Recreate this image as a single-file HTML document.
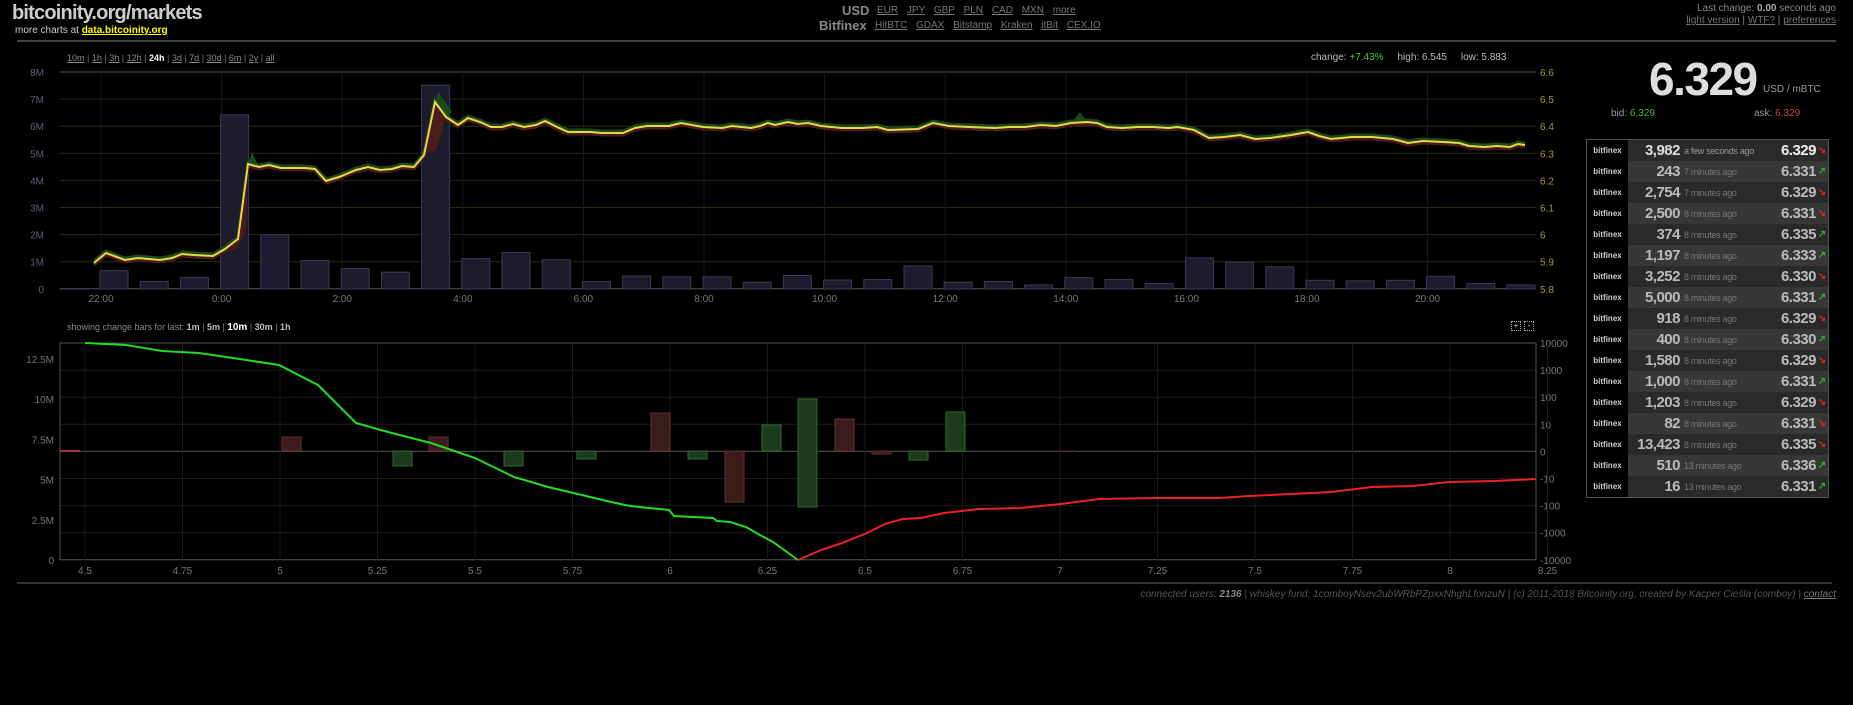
<!DOCTYPE html>
<html><head><meta charset="utf-8"><style>
body{margin:0;background:#000;width:1853px;height:705px;overflow:hidden;font-family:"Liberation Sans",sans-serif;position:relative;color:#888}
.a{position:absolute;white-space:nowrap}
a{color:#777;text-decoration:underline}
.tl{font-size:10px;color:#777}
.tl a{color:#888}
table{border-collapse:collapse}
td{padding:0;height:21px;font-size:10px}
</style></head><body>
<div class="a" style="left:12px;top:2px;font-size:20px;font-weight:bold;color:#ccc;letter-spacing:-0.8px">bitcoinity.org/markets</div>
<div class="a" style="left:15px;top:25px;font-size:10px;color:#ccc">more charts at <a style="color:#ff0;font-weight:bold">data.bitcoinity.org</a></div>
<div class="a" style="left:842px;top:3px;font-size:13px;font-weight:bold;color:#888">USD</div>
<div class="a" style="left:877px;top:5px;font-size:10px;word-spacing:6px"><a>EUR</a> <a>JPY</a> <a>GBP</a> <a>PLN</a> <a>CAD</a> <a>MXN</a> <a>more</a></div>
<div class="a" style="left:819px;top:18px;font-size:13px;font-weight:bold;color:#888">Bitfinex</div>
<div class="a" style="left:875px;top:20px;font-size:10px;word-spacing:6px"><a>HitBTC</a> <a>GDAX</a> <a>Bitstamp</a> <a>Kraken</a> <a>itBit</a> <a>CEX.IO</a></div>
<div class="a" style="right:17px;top:3px;font-size:10px;color:#888;text-align:right">Last change: <b style="color:#aaa">0.00</b> seconds ago<br><span style="line-height:14px"><a>light version</a> | <a>WTF?</a> | <a>preferences</a></span></div>
<div class="a" style="left:17px;top:40px;width:1819px;height:2px;background:#444"></div>
<div class="a tl" style="left:67px;top:53px;font-size:9px"><a>10m</a> | <a>1h</a> | <a>3h</a> | <a>12h</a> | <b style="color:#fff">24h</b> | <a>3d</a> | <a>7d</a> | <a>30d</a> | <a>6m</a> | <a>2y</a> | <a>all</a></div>
<div class="a" style="left:1311px;top:52px;font-size:10px;color:#bbb">change: <span style="color:#4c4">+7.43%</span> &nbsp; &nbsp; high: 6.545 &nbsp; &nbsp; low: 5.883</div>
<div class="a" style="left:67px;top:322px;font-size:9px;color:#888">showing change bars for last: <b style="color:#bbb">1m</b> | <b style="color:#bbb">5m</b> | <b style="color:#fff;font-size:10px">10m</b> | <b style="color:#bbb">30m</b> | <b style="color:#bbb">1h</b></div>
<div class="a" style="left:1511px;top:321px;width:8px;height:8px;border:1px dotted #aaa;font-size:8px;line-height:8px;text-align:center;color:#ccc">+</div>
<div class="a" style="left:1524px;top:321px;width:8px;height:8px;border:1px dotted #aaa;font-size:8px;line-height:8px;text-align:center;color:#ccc">-</div>
<svg class="a" style="left:0;top:0" width="1853" height="705" id="s"></svg>
<div class="a" style="left:1649px;top:52px;font-size:46px;font-weight:bold;color:#ddd;letter-spacing:-1.5px">6.329</div>
<div class="a" style="left:1763px;top:84px;font-size:10px;color:#999">USD / mBTC</div>
<div class="a" style="left:1611px;top:108px;font-size:10px;color:#999">bid: <span style="color:#4b4">6.329</span></div>
<div class="a" style="left:1754px;top:108px;font-size:10px;color:#999">ask: <span style="color:#c44">6.329</span></div>
<div class="a" style="left:1586px;top:139px;border:1px solid #555"><table id="t"></table></div>
<div class="a" style="left:17px;top:582px;width:1815px;height:2px;background:#333"></div>
<div class="a" style="right:17px;top:589px;font-size:10px;font-style:italic;color:#555">connected users: <b style="color:#888">2136</b> | whiskey fund: 1comboyNsev2ubWRbPZpxxNhghLfonzuN | (c) 2011-2018 Bitcoinity.org, created by Kacper Cieśla (comboy) | <a style="color:#777">contact</a></div>
<script>
var s='';
function L(x1,y1,x2,y2,c,w){s+='<line x1="'+x1+'" y1="'+y1+'" x2="'+x2+'" y2="'+y2+'" stroke="'+c+'" stroke-width="'+(w||1)+'"/>';}
function T(x,y,t,c,a){s+='<text x="'+x+'" y="'+y+'" fill="'+c+'" font-size="10" font-family="Liberation Sans" text-anchor="'+(a||'start')+'">'+t+'</text>';}
var X0=60,X1=1536,Y0=72,Y1=289;
for(var i=0;i<=8;i++){var y=Y0+i*27.1;L(X0,y,X1,y,i==0||i==8?'#555':'#2a2a14');T(44,y+4,['8M','7M','6M','5M','4M','3M','2M','1M','0'][i],'#5a5f7a','end');T(1540,y+4,['6.6','6.5','6.4','6.3','6.2','6.1','6','5.9','5.8'][i],'#a09a3a');}
var hrs=['22:00','0:00','2:00','4:00','6:00','8:00','10:00','12:00','14:00','16:00','18:00','20:00'];
for(var i=0;i<12;i++){var x=101+i*120.6;L(x,Y0,x,Y1,'#1a1a1a');T(x,302,hrs[i],'#777','middle');}
var bv=[0.02,0.68,0.28,0.43,6.43,2.0,1.05,0.75,0.62,7.52,1.12,1.35,1.08,0.27,0.48,0.45,0.45,0.25,0.5,0.33,0.35,0.85,0.25,0.28,0.15,0.42,0.35,0.2,1.15,1.0,0.82,0.32,0.3,0.32,0.47,0.2,0.15];
for(var i=0;i<bv.length;i++){var x=i==0?60:100+(i-1)*40.2,h=bv[i]*27.1;s+='<rect x="'+x+'" y="'+(Y1-h)+'" width="28" height="'+h+'" fill="#1c1c2c" stroke="#3a3a55"/>';}
var p=[[94,263],[106,253],[125,260],[138,258],[160,260],[172,258],[182,254],[194,255],[213,256],[225,249],[238,239],[248,164],[259,167],[269,165],[281,168],[305,168],[315,169],[326,181],[339,177],[356,170],[368,167],[380,170],[392,169],[402,166],[414,167],[424,155],[435,102],[446,117],[458,125],[468,118],[480,122],[491,127],[502,127],[513,124],[524,127],[536,125],[545,121],[557,127],[568,132],[591,132],[601,133],[623,133],[635,128],[647,126],[669,126],[681,123],[703,127],[722,128],[732,126],[751,128],[760,126],[768,123],[775,125],[788,122],[798,124],[808,123],[821,126],[842,128],[862,128],[877,127],[888,130],[918,129],[933,123],[949,126],[969,127],[995,128],[1010,127],[1025,127],[1041,125],[1056,126],[1071,123],[1087,122],[1097,123],[1107,127],[1122,128],[1138,127],[1153,127],[1168,128],[1178,127],[1194,130],[1209,138],[1224,137],[1240,135],[1255,139],[1270,138],[1291,135],[1308,132],[1319,136],[1331,139],[1352,137],[1372,137],[1393,139],[1408,143],[1423,141],[1444,142],[1459,143],[1469,146],[1484,147],[1497,146],[1510,147],[1518,144],[1525,145]];
function pl(o,c,w){return '<polyline fill="none" stroke="'+c+'" stroke-width="'+w+'" points="'+p.map(function(q){return q[0]+','+(q[1]+o)}).join(' ')+'"/>';}
s+='<polygon fill="#4a1c1c" points="225,249 238,239 248,164 246,230 236,250"/><polygon fill="#4a1c1c" points="424,155 435,102 446,117 436,150"/><polygon fill="#1c4a1c" points="435,102 446,117 452,112 438,92"/><polygon fill="#1c4a1c" points="248,164 259,167 252,152"/><polygon fill="#1c4a1c" points="1071,123 1087,122 1080,112"/>';
s+=pl(-2,'#1c4a1c',3)+pl(2,'#4a1c1c',3)+pl(0,'#e8d84a',2);
var B0=343,B1=560;
for(var i=0;i<=8;i++){var y=B0+i*27.1;L(X0,y,X1,y,i==0||i==8||i==4?'#555':'#1c1c1c');T(1540,y+4,['10000','1000','100','10','0','-10','-100','-1000','-10000'][i],'#777');}
[[12.5,'12.5M'],[10,'10M'],[7.5,'7.5M'],[5,'5M'],[2.5,'2.5M'],[0,'0']].forEach(function(v){T(54,B1-v[0]*16.08+4,v[1],'#777','end');});
for(var i=0;i<16;i++){var x=85+i*97.5;L(x,B0,x,B1,'#1a1a1a');T(x,574,''+(4.5+i*0.25),'#777','middle');}
L(60,B0,60,B1,'#555');L(X1,B0,X1,B1,'#555');
var bars=[[282,437,451,'r'],[393,451,466,'g'],[429,437,451,'r'],[504,451,466,'g'],[577,451,459,'g'],[651,413,451,'r'],[688,451,459,'g'],[725,451,502,'r'],[762,425,451,'g'],[798,399,507,'g'],[835,419,451,'r'],[872,451,454,'r'],[909,451,460,'g'],[946,412,451,'g']];
bars.forEach(function(b){var g=b[3]=='g';s+='<rect x="'+b[0]+'" y="'+b[1]+'" width="19" height="'+(b[2]-b[1])+'" fill="'+(g?'#1c3a1c':'#3a1c1c')+'" stroke="'+(g?'#2e6a2e':'#6a2e2e')+'"/>';});
L(60,451,80,451,'#a33',2);L(1057,451,1075,451,'#622',1);
var gl=[[85,343],[126,345],[162,351],[199,353],[233,358],[279,365],[318,385],[356,423],[388,432],[431,443],[475,458],[514,477],[548,487],[582,495],[611,502],[630,506],[669,510],[674,516],[693,517],[713,518],[717,521],[730,522],[746,527],[760,535],[773,542],[798,560]];
var rl=[[798,560],[821,550],[842,543],[867,533],[885,524],[903,519],[921,518],[944,513],[979,509],[1020,508],[1061,504],[1099,499],[1158,498],[1219,498],[1250,496],[1291,494],[1331,492],[1372,487],[1413,486],[1449,482],[1495,481],[1536,479]];
s+='<polyline fill="none" stroke="#22dd22" stroke-width="2" points="'+gl.join(' ')+'"/>';
s+='<polyline fill="none" stroke="#ee2222" stroke-width="2" points="'+rl.join(' ')+'"/>';
document.getElementById('s').innerHTML=s;
var rows=[['3,982','a few seconds ago','6.329',0],['243','7 minutes ago','6.331',1],['2,754','7 minutes ago','6.329',0],['2,500','8 minutes ago','6.331',0],['374','8 minutes ago','6.335',1],['1,197','8 minutes ago','6.333',1],['3,252','8 minutes ago','6.330',0],['5,000','8 minutes ago','6.331',1],['918','8 minutes ago','6.329',0],['400','8 minutes ago','6.330',1],['1,580','8 minutes ago','6.329',0],['1,000','8 minutes ago','6.331',1],['1,203','8 minutes ago','6.329',0],['82','8 minutes ago','6.331',0],['13,423','8 minutes ago','6.335',0],['510','13 minutes ago','6.336',1],['16','13 minutes ago','6.331',1]];
var h='';
rows.forEach(function(r,i){var bg=i%2?'#373737':'#2a2a2a';var ar=r[3]?'<span style="color:#3a3">&#x2197;</span>':'<span style="color:#d22">&#x2198;</span>';
h+='<tr style="background:'+bg+'"><td style="background:#000;width:41px;text-align:center;font-size:8px;font-weight:bold;color:#ccc">bitfinex</td><td style="width:52px;text-align:right;font-size:15px;font-weight:bold;letter-spacing:-0.5px;color:'+(i?'#bbb':'#ddd')+'">'+r[0]+'</td><td style="width:93px;padding-left:4px;font-size:9px;letter-spacing:-0.3px;color:'+(i?'#777':'#999')+'">'+r[1]+'</td><td style="width:39px;text-align:right;font-size:15px;font-weight:bold;letter-spacing:-0.5px;color:'+(i?'#bbb':'#eee')+'">'+r[2]+'</td><td style="width:12px;text-align:center;font-size:10px;font-weight:bold">'+ar+'</td></tr>';});
document.getElementById('t').innerHTML=h;
</script>
</body></html>
